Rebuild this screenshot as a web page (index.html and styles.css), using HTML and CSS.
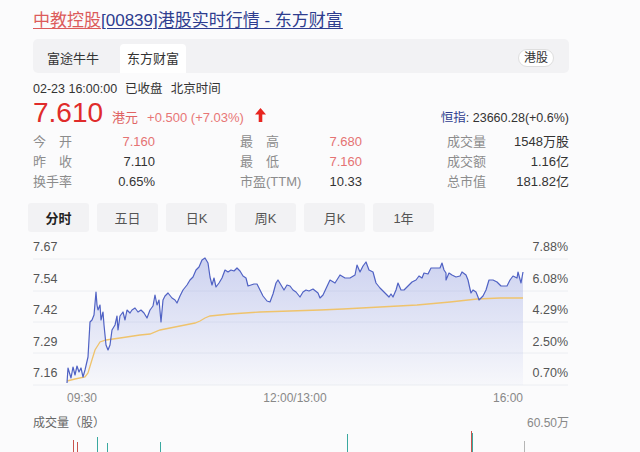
FILE: index.html
```html
<!DOCTYPE html>
<html lang="zh-CN">
<head>
    <meta charset="UTF-8">
    <meta name="viewport" content="width=device-width, initial-scale=1.0">
    <title>中教控股[00839]港股实时行情 - 东方财富</title>
    <link rel="stylesheet" href="styles.css">
</head>
<body>
    <main class="page">
        <h1 class="title"><a class="title-name" href="#">中教控股</a><a class="title-rest" href="#">[00839]港股实时行情 - 东方财富</a></h1>

        <nav class="tabbar">
            <div class="tabs">
                <span class="tab">富途牛牛</span>
                <span class="tab active">东方财富</span>
            </div>
            <span class="market">港股</span>
        </nav>

        <div class="meta">
            <span>02-23 16:00:00</span>
            <span>已收盘</span>
            <span>北京时间</span>
        </div>

        <div class="quote">
            <span class="price">7.610</span>
            <span class="currency">港元</span>
            <span class="change">+0.500 (+7.03%)</span>
            <svg class="arrow" width="11" height="14" viewBox="0 0 11 14">
                <path d="M5.5 0 L11 6.5 L7.3 6.5 L7.3 14 L3.7 14 L3.7 6.5 L0 6.5 Z" fill="#e8251f"/>
            </svg>
            <span class="index"><b>恒指</b>: 23660.28(+0.6%)</span>
        </div>

        <section class="stats">
            <div class="stat"><span class="label">今开</span><span class="value up">7.160</span></div>
            <div class="stat"><span class="label">最高</span><span class="value up">7.680</span></div>
            <div class="stat"><span class="label wide">成交量</span><span class="value">1548万股</span></div>
            <div class="stat"><span class="label">昨收</span><span class="value">7.110</span></div>
            <div class="stat"><span class="label">最低</span><span class="value up">7.160</span></div>
            <div class="stat"><span class="label wide">成交额</span><span class="value">1.16亿</span></div>
            <div class="stat"><span class="label wide">换手率</span><span class="value">0.65%</span></div>
            <div class="stat"><span class="label wide">市盈(TTM)</span><span class="value">10.33</span></div>
            <div class="stat"><span class="label wide">总市值</span><span class="value">181.82亿</span></div>
        </section>

        <div class="periods">
            <button class="period active">分时</button>
            <button class="period">五日</button>
            <button class="period">日K</button>
            <button class="period">周K</button>
            <button class="period">月K</button>
            <button class="period">1年</button>
        </div>

        <svg class="chart" width="536" height="172" viewBox="33 236 536 172">
            <defs>
                <linearGradient id="area" x1="0" y1="0" x2="0" y2="1">
                    <stop offset="0" stop-color="#8d9ae0" stop-opacity="0.42"/>
                    <stop offset="1" stop-color="#8d9ae0" stop-opacity="0.04"/>
                </linearGradient>
            </defs>
            <g class="grid">
                <line x1="33" y1="259" x2="568" y2="259"/>
                <line x1="33" y1="291" x2="568" y2="291"/>
                <line x1="33" y1="322" x2="568" y2="322"/>
                <line x1="33" y1="353" x2="568" y2="353"/>
                <line x1="33" y1="385" x2="568" y2="385"/>
            </g>
            <polygon fill="url(#area)" points="67,385 67,383 68,368 71,378 73,367 75,375 77,366 79,372 81,368 83,377 85,370 88,357 90,322 92,320 94,315 96,292 97,305 98,310 100,305 101,320 103,312 104,325 106,345 108,350 110,345 112,330 115,325 117,316 118,330 120,316 123,312 125,320 127,310 130,313 132,310 135,308 138,312 141,310 144,313 147,318 150,310 153,306 155,295 157,305 159,300 161,322 163,300 165,296 168,293 172,298 175,300 177,303 180,296 183,290 187,285 190,280 193,277 196,270 199,267 202,260 205,258 208,263 210,277 212,285 214,278 216,287 219,283 222,278 225,270 228,272 231,270 234,271 237,268 240,271 243,276 246,278 248,286 251,285 254,284 257,284 260,290 263,296 267,301 270,302 273,294 276,283 278,280 281,285 284,290 287,285 290,286 293,290 296,292 300,297 303,292 306,290 309,291 313,289 318,293 320,298 323,295 330,280 335,283 340,275 345,278 350,278 355,275 357,265 360,272 363,266 366,262 369,270 373,272 376,283 380,288 384,292 389,297 391,294 393,297 396,290 398,283 401,290 404,290 408,286 412,282 416,280 419,276 422,278 424,273 428,274 431,268 436,268 440,268 442,263 444,270 446,273 446,280 449,273 452,275 456,277 460,276 462,272 466,275 468,280 470,289 471,293 473,290 476,292 478,297 479,300 483,296 486,290 489,280 493,280 497,282 501,286 507,286 510,280 513,276 517,278 518,272 521,283 523,272 523,385"/>
            <polyline class="avg-line" points="67,381 75,379 85,377 88,373 91,363 95,350 100,342 106,340 120,338 140,335 150,334 160,330 180,326 195,323 200,321 205,318 210,316 230,314 260,312 290,311 320,310 343,309 380,307 417,305 450,302 477,299 500,298 523,298"/>
            <polyline class="price-line" points="67,383 68,368 71,378 73,367 75,375 77,366 79,372 81,368 83,377 85,370 88,357 90,322 92,320 94,315 96,292 97,305 98,310 100,305 101,320 103,312 104,325 106,345 108,350 110,345 112,330 115,325 117,316 118,330 120,316 123,312 125,320 127,310 130,313 132,310 135,308 138,312 141,310 144,313 147,318 150,310 153,306 155,295 157,305 159,300 161,322 163,300 165,296 168,293 172,298 175,300 177,303 180,296 183,290 187,285 190,280 193,277 196,270 199,267 202,260 205,258 208,263 210,277 212,285 214,278 216,287 219,283 222,278 225,270 228,272 231,270 234,271 237,268 240,271 243,276 246,278 248,286 251,285 254,284 257,284 260,290 263,296 267,301 270,302 273,294 276,283 278,280 281,285 284,290 287,285 290,286 293,290 296,292 300,297 303,292 306,290 309,291 313,289 318,293 320,298 323,295 330,280 335,283 340,275 345,278 350,278 355,275 357,265 360,272 363,266 366,262 369,270 373,272 376,283 380,288 384,292 389,297 391,294 393,297 396,290 398,283 401,290 404,290 408,286 412,282 416,280 419,276 422,278 424,273 428,274 431,268 436,268 440,268 442,263 444,270 446,273 446,280 449,273 452,275 456,277 460,276 462,272 466,275 468,280 470,289 471,293 473,290 476,292 478,297 479,300 483,296 486,290 489,280 493,280 497,282 501,286 507,286 510,280 513,276 517,278 518,272 521,283 523,272"/>
            <g class="axis">
                <text x="33" y="247">7.67</text>
                <text x="33" y="279">7.54</text>
                <text x="33" y="310">7.42</text>
                <text x="33" y="342">7.29</text>
                <text x="33" y="373">7.16</text>
            </g>
            <g class="axis right">
                <text x="568" y="247">7.88%</text>
                <text x="568" y="279">6.08%</text>
                <text x="568" y="310">4.29%</text>
                <text x="568" y="342">2.50%</text>
                <text x="568" y="373">0.70%</text>
            </g>
            <g class="ticks">
                <text x="67" y="398">09:30</text>
                <text x="295" y="398" text-anchor="middle">12:00/13:00</text>
                <text x="523" y="398" text-anchor="end">16:00</text>
            </g>
        </svg>

        <div class="vol-head">
            <span>成交量（股）</span>
            <span class="vol-max">60.50万</span>
        </div>

        <svg class="volume" width="536" height="30" viewBox="33 431 536 30">
            <rect class="bar-up" x="73" y="440" width="1" height="21"/>
            <rect class="bar-up" x="77" y="442" width="1" height="19"/>
            <rect class="bar-down" x="97" y="437" width="1" height="24"/>
            <rect class="bar-down" x="107" y="443" width="1" height="18"/>
            <rect class="bar-down" x="160" y="442" width="1" height="19"/>
            <rect class="bar-down" x="347" y="434" width="1" height="27"/>
            <rect class="bar-up" x="471" y="429" width="1" height="32"/>
            <rect class="bar-down" x="472" y="433" width="1" height="28"/>
            <rect class="bar-flat" x="524" y="441" width="1" height="20"/>
        </svg>
    </main>
</body>
</html>
```

FILE: styles.css
```css
html, body {
    margin: 0;
    padding: 0;
    overflow: hidden;
}

body {
    font-family: 'Liberation Sans', 'Noto Sans CJK SC', sans-serif;
    background-color: #fbfbfc;
    color: #333;
    padding-top: 11px;
}

.page {
    width: 536px;
    margin-left: 33px;
}

.title {
    margin: 0;
    font-size: 17px;
    line-height: 20px;
    font-weight: normal;
    white-space: nowrap;
}

.title a {
    text-decoration: underline;
    text-decoration-thickness: 1px;
    text-underline-offset: 2px;
}

.title-name {
    color: #dc5b5b;
}

.title-rest {
    color: #2e3d8f;
}

.tabbar {
    display: flex;
    align-items: flex-end;
    height: 34px;
    margin-top: 8px;
    background-color: #f2f2f4;
    border-radius: 5px;
}

.tabs {
    display: flex;
    gap: 14px;
    padding-left: 7px;
}

.tab {
    width: 66px;
    height: 29px;
    line-height: 29px;
    text-align: center;
    font-size: 13px;
    color: #333;
    border-radius: 4px 4px 0 0;
}

.tab.active {
    background-color: #fff;
}

.market {
    margin-left: auto;
    margin-right: 15px;
    margin-bottom: 6px;
    height: 16px;
    line-height: 16px;
    padding: 0 5px;
    font-size: 12px;
    color: #333;
    background-color: #fff;
    border: 1px solid #dedede;
    border-radius: 9px;
}

.meta {
    display: flex;
    gap: 8px;
    margin-top: 8px;
    font-size: 12.5px;
    line-height: 16px;
    color: #333;
}

.quote {
    display: flex;
    align-items: baseline;
    height: 32px;
}

.price {
    font-size: 28px;
    line-height: 32px;
    color: #e02b2b;
}

.currency {
    margin-left: 9px;
    font-size: 13px;
    color: #e06464;
}

.change {
    margin-left: 9px;
    font-size: 13px;
    color: #e87676;
}

.arrow {
    margin-left: 11px;
}

.index {
    margin-left: auto;
    font-size: 12.5px;
    color: #333;
}

.index b {
    font-weight: normal;
    color: #2e3d8f;
}

.stats {
    display: grid;
    grid-template-columns: repeat(3, 122px);
    column-gap: 85px;
    margin-top: 3px;
    font-size: 13px;
    line-height: 20px;
}

.stat {
    display: flex;
    justify-content: space-between;
}

.label {
    width: 3em;
    color: #8c8c8c;
    text-align: justify;
    text-align-last: justify;
}

.label.wide {
    width: auto;
    text-align-last: auto;
}

.value {
    color: #333;
}

.value.up {
    color: #e57373;
}

.periods {
    display: flex;
    gap: 8px;
    margin-top: 11px;
    margin-left: -5px;
}

.period {
    width: 61px;
    height: 29px;
    padding: 0;
    border: none;
    border-radius: 3px;
    background-color: #f2f2f4;
    font-family: inherit;
    font-size: 13px;
    color: #555;
}

.period.active {
    font-weight: bold;
    color: #222;
}

.chart {
    display: block;
    margin-top: 4px;
}

.grid line {
    stroke: #eceef2;
    stroke-width: 1;
}

.price-line {
    fill: none;
    stroke: #5062c4;
    stroke-width: 1.2;
    stroke-linejoin: round;
}

.avg-line {
    fill: none;
    stroke: #efc36c;
    stroke-width: 1.3;
}

.axis text {
    font-size: 12.5px;
    fill: #555;
    dominant-baseline: central;
}

.axis.right text {
    text-anchor: end;
}

.ticks text {
    font-size: 12px;
    fill: #888;
    dominant-baseline: central;
}

.vol-head {
    display: flex;
    justify-content: space-between;
    margin-top: 7px;
    font-size: 12px;
    line-height: 16px;
    color: #666;
}

.vol-max {
    color: #888;
}

.volume {
    display: block;
}

.bar-up {
    fill: #c9544d;
}

.bar-down {
    fill: #3aa9a0;
}

.bar-flat {
    fill: #b5b5b5;
}
```
